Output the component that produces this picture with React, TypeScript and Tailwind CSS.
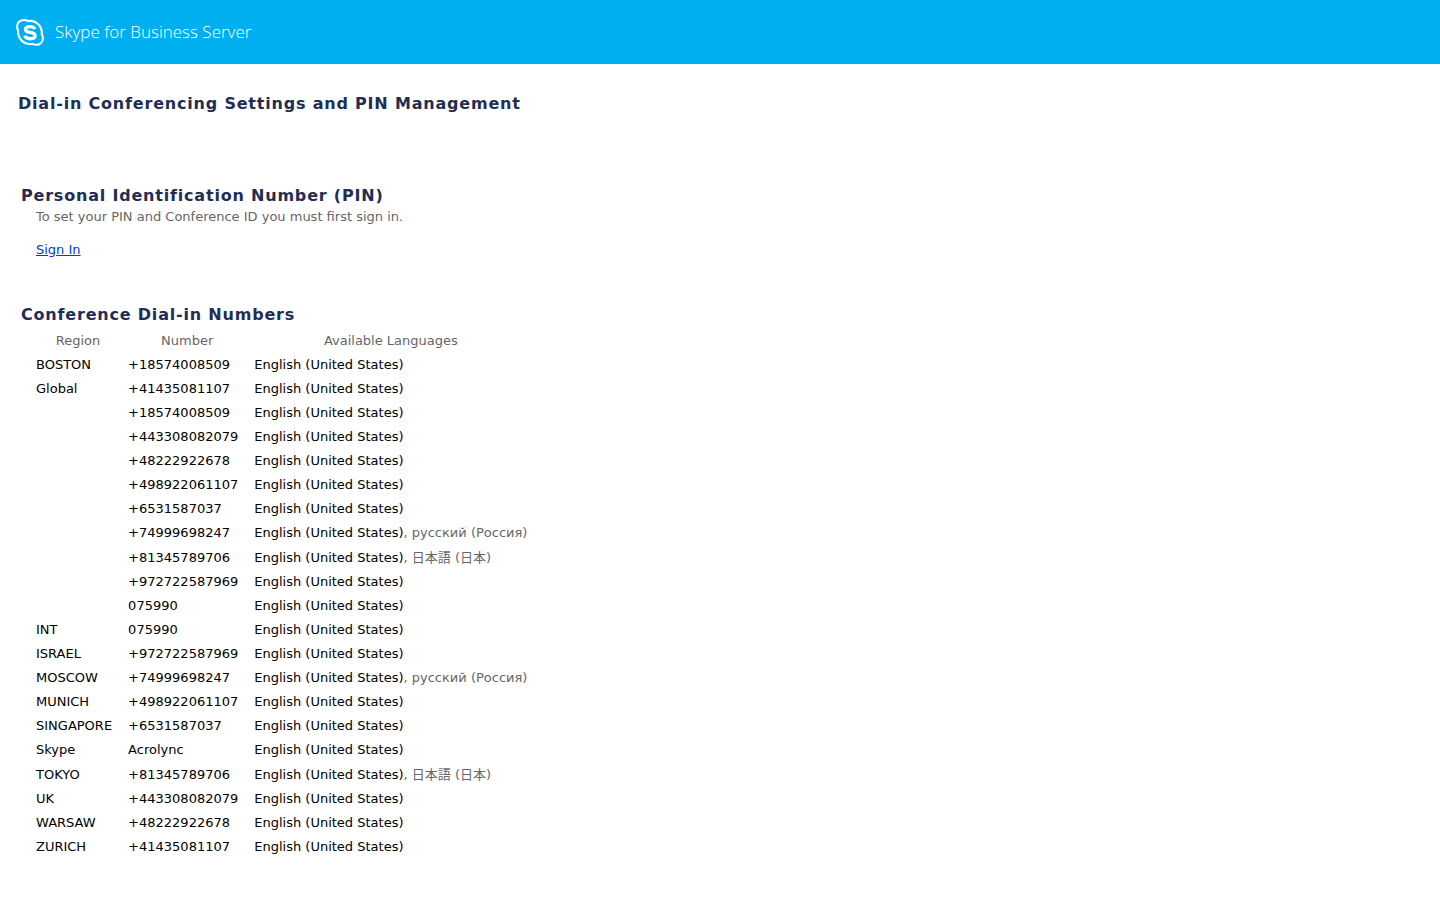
type Entry = {
  region?: string;
  number: string;
  extra?: string;
  tall?: boolean;
};

const entries: Entry[] = [
  { region: 'BOSTON', number: '+18574008509' },
  { region: 'Global', number: '+41435081107' },
  { number: '+18574008509' },
  { number: '+443308082079' },
  { number: '+48222922678' },
  { number: '+498922061107' },
  { number: '+6531587037' },
  { number: '+74999698247', extra: 'русский (Россия)' },
  { number: '+81345789706', extra: '日本語 (日本)', tall: true },
  { number: '+972722587969' },
  { number: '075990' },
  { region: 'INT', number: '075990' },
  { region: 'ISRAEL', number: '+972722587969' },
  { region: 'MOSCOW', number: '+74999698247', extra: 'русский (Россия)' },
  { region: 'MUNICH', number: '+498922061107' },
  { region: 'SINGAPORE', number: '+6531587037' },
  { region: 'Skype', number: 'Acrolync' },
  { region: 'TOKYO', number: '+81345789706', extra: '日本語 (日本)', tall: true },
  { region: 'UK', number: '+443308082079' },
  { region: 'WARSAW', number: '+48222922678' },
  { region: 'ZURICH', number: '+41435081107' },
];

function SkypeLogo() {
  return (
    <svg className="h-7 w-7 shrink-0" viewBox="0 0 28 28" fill="none" aria-hidden="true">
      <path
        d="M8 2C4 2 1.1 4.8 1.1 8.5C1.1 10.1 1.5 11.3 2.1 12.4C1.4 19.8 6.8 26 14.2 26C15 26 15.7 25.9 16.4 25.8C17.4 26.4 18.7 26.8 20.1 26.8C24 26.8 26.9 23.9 26.9 20.4C26.9 18.7 26.5 17.4 25.8 16.3C26.5 8.9 21 2.9 13.9 2.9C13.2 2.9 12.6 2.9 12 3C10.8 2.4 9.5 2 8 2Z"
        stroke="white"
        strokeWidth="2.1"
      />
      <path
        d="M18.7 11.1C18.1 9.4 16.4 8.6 14 8.6C11.3 8.6 9.5 9.7 9.5 11.4C9.5 15.6 19.1 13.3 19.1 17.5C19.1 19.6 17 20.7 14.1 20.7C11.3 20.7 9.4 19.6 8.9 17.6"
        stroke="white"
        strokeWidth="3.4"
      />
    </svg>
  );
}

export default function App() {
  return (
    <div className="min-h-screen bg-white font-['DejaVu_Sans','Noto_Sans_CJK_JP',sans-serif] text-[13px] leading-4 text-[#666666]">
      <header className="flex h-16 items-center gap-[11px] bg-[#00aff0] px-4 text-white">
        <SkypeLogo />
        <span className="font-['Open_Sans',sans-serif] text-[17px] leading-6 font-light">
          Skype for Business Server
        </span>
      </header>

      <main className="px-[18px] pt-7 pb-10">
        <h1 className="text-base leading-6 font-bold tracking-wider text-[#222d54]">
          Dial-in Conferencing Settings and PIN Management
        </h1>

        <section className="mt-[68px] pl-[3px]">
          <h2 className="text-base leading-6 font-bold tracking-wider text-[#222d54]">
            Personal Identification Number (PIN)
          </h2>
          <div className="pl-[15px]">
            <p className="mt-px">To set your PIN and Conference ID you must first sign in.</p>
            <p className="mt-[17px]">
              <a href="#sign-in" className="text-[#0033ff] underline">
                Sign In
              </a>
            </p>
          </div>
        </section>

        <section className="mt-[45px] pl-[3px]">
          <h2 className="text-base leading-6 font-bold tracking-wider text-[#222d54]">
            Conference Dial-in Numbers
          </h2>
          <table className="mt-[2px] ml-[15px] border-collapse">
            <thead>
              <tr className="h-6">
                <th scope="col" className="pr-2 text-center font-normal">Region</th>
                <th scope="col" className="pr-2 text-center font-normal">Number</th>
                <th scope="col" className="text-center font-normal">Available Languages</th>
              </tr>
            </thead>
            <tbody>
              {entries.map((entry, index) => (
                <tr key={index} className={entry.tall ? 'h-[25px] text-black' : 'h-6 text-black'}>
                  <td className="pr-4">{entry.region}</td>
                  <td className="pr-4">{entry.number}</td>
                  <td>
                    English (United States)
                    {entry.extra && <span className="text-[#666666]">, {entry.extra}</span>}
                  </td>
                </tr>
              ))}
            </tbody>
          </table>
        </section>
      </main>
    </div>
  );
}
